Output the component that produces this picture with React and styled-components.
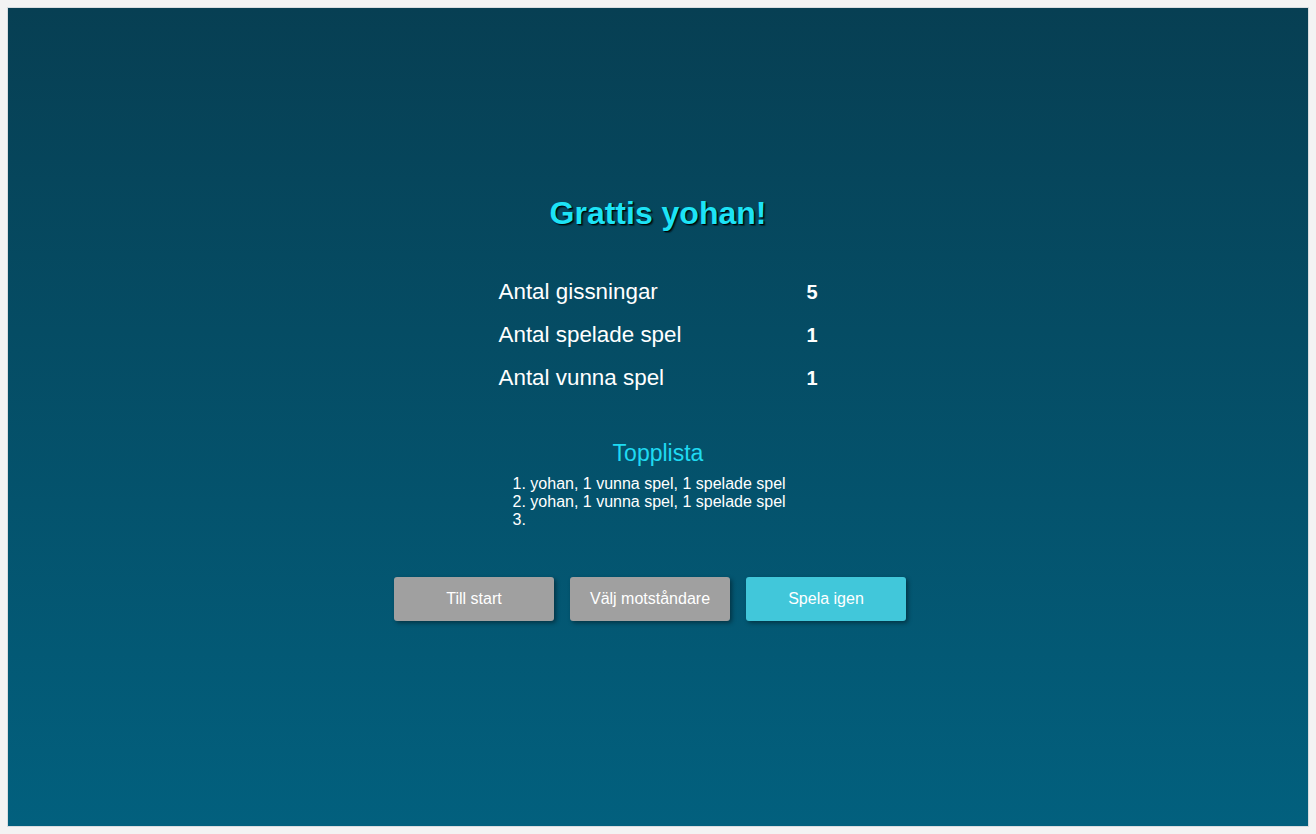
import React from "react";
import styled, { createGlobalStyle } from "styled-components";

const GlobalStyle = createGlobalStyle`
  html, body {
    margin: 0;
    padding: 0;
    background: #f3f3f3;
  }
  body {
    font-family: "Liberation Sans", Arial, sans-serif;
  }
`;

const Page = styled.div`
  padding: 7px 8px 8px 7px;
`;

const Panel = styled.main`
  box-sizing: border-box;
  width: 1302px;
  height: 820px;
  border: 1px solid #d9dde0;
  background: linear-gradient(to bottom, #073f53 0%, #02607e 100%);
  display: flex;
  flex-direction: column;
  align-items: center;
  padding-top: 187px;
  color: #ffffff;
`;

const Title = styled.h1`
  margin: 0;
  font-size: 32px;
  line-height: 36px;
  font-weight: 700;
  color: #1de3f6;
  text-shadow: 1px 1px 1px #000000, 2px 2px 1px rgba(0, 0, 0, 0.35);
`;

const Stats = styled.div`
  margin-top: 40px;
  width: 319px;
  display: grid;
  grid-template-columns: 1fr auto;
  grid-auto-rows: 43px;
`;

const Label = styled.div`
  font-size: 22.4px;
  line-height: 23px;
  padding-top: 9px;
  white-space: nowrap;
`;

const Value = styled.div`
  font-size: 20px;
  line-height: 23px;
  padding-top: 10px;
  font-weight: 700;
  text-align: right;
`;

const SubTitle = styled.h2`
  margin: 40px 0 0;
  font-size: 23px;
  line-height: 26px;
  font-weight: 400;
  color: #1fdaf2;
`;

const TopList = styled.ol`
  margin: 8.5px 0 0;
  padding: 0;
  font-size: 16px;
  line-height: 18px;
  white-space: nowrap;
`;

const Entry = styled.li`
  height: 18px;
`;

const Buttons = styled.div`
  margin-top: 48.5px;
  padding-right: 16px;
  display: flex;
  gap: 16px;
`;

const Button = styled.button`
  width: 160px;
  height: 44px;
  border: none;
  border-radius: 3px;
  background: ${(p) => (p.$primary ? "#41c7da" : "#a0a0a0")};
  color: #ffffff;
  font-family: "Liberation Sans", Arial, sans-serif;
  font-size: 16px;
  box-shadow: 2px 2px 4px rgba(0, 0, 0, 0.4);
  cursor: pointer;
`;

const stats = [
  ["Antal gissningar", 5],
  ["Antal spelade spel", 1],
  ["Antal vunna spel", 1],
];

const top = [
  "yohan, 1 vunna spel, 1 spelade spel",
  "yohan, 1 vunna spel, 1 spelade spel",
  "",
];

export default function App() {
  return (
    <>
      <GlobalStyle />
      <Page>
        <Panel>
          <Title>Grattis yohan!</Title>
          <Stats>
            {stats.map(([l, v]) => (
              <React.Fragment key={l}>
                <Label>{l}</Label>
                <Value>{v}</Value>
              </React.Fragment>
            ))}
          </Stats>
          <SubTitle>Topplista</SubTitle>
          <TopList>
            {top.map((t, i) => (
              <Entry key={i}>{t}</Entry>
            ))}
          </TopList>
          <Buttons>
            <Button>Till start</Button>
            <Button>Välj motståndare</Button>
            <Button $primary>Spela igen</Button>
          </Buttons>
        </Panel>
      </Page>
    </>
  );
}
